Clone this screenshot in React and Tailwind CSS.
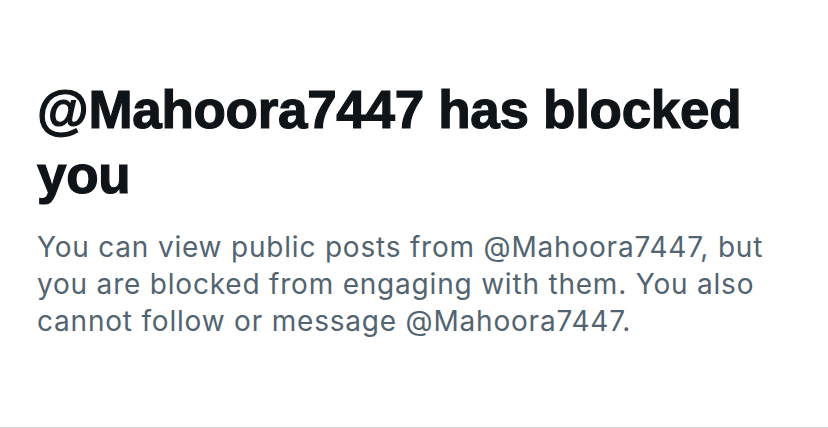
export default function App() {
  return (
    <div className="w-[828px] h-[428px] bg-white flex flex-col border-b border-[#d9d9d9] box-border">
      <div className="pl-[37px] pt-[77px]">
        <h1 className="text-[53px] leading-[65px] font-bold text-[#0f1419] whitespace-nowrap tracking-[-0.3px] [-webkit-text-stroke:1.2px_#0f1419]" style={{ fontFamily: '"Liberation Sans", Arial, sans-serif' }}>
          @Mahoora7447 has blocked
          <br />
          you
        </h1>
        <p className="mt-[22px] text-[28px] leading-[37px] tracking-[0.8px] text-[#536471] whitespace-nowrap" style={{ fontFamily: 'Inter, "Liberation Sans", sans-serif' }}>
          You can view public posts from @Mahoora7447, but
          <br />
          you are blocked from engaging with them. You also
          <br />
          cannot follow or message @Mahoora7447.
        </p>
      </div>
    </div>
  );
}
